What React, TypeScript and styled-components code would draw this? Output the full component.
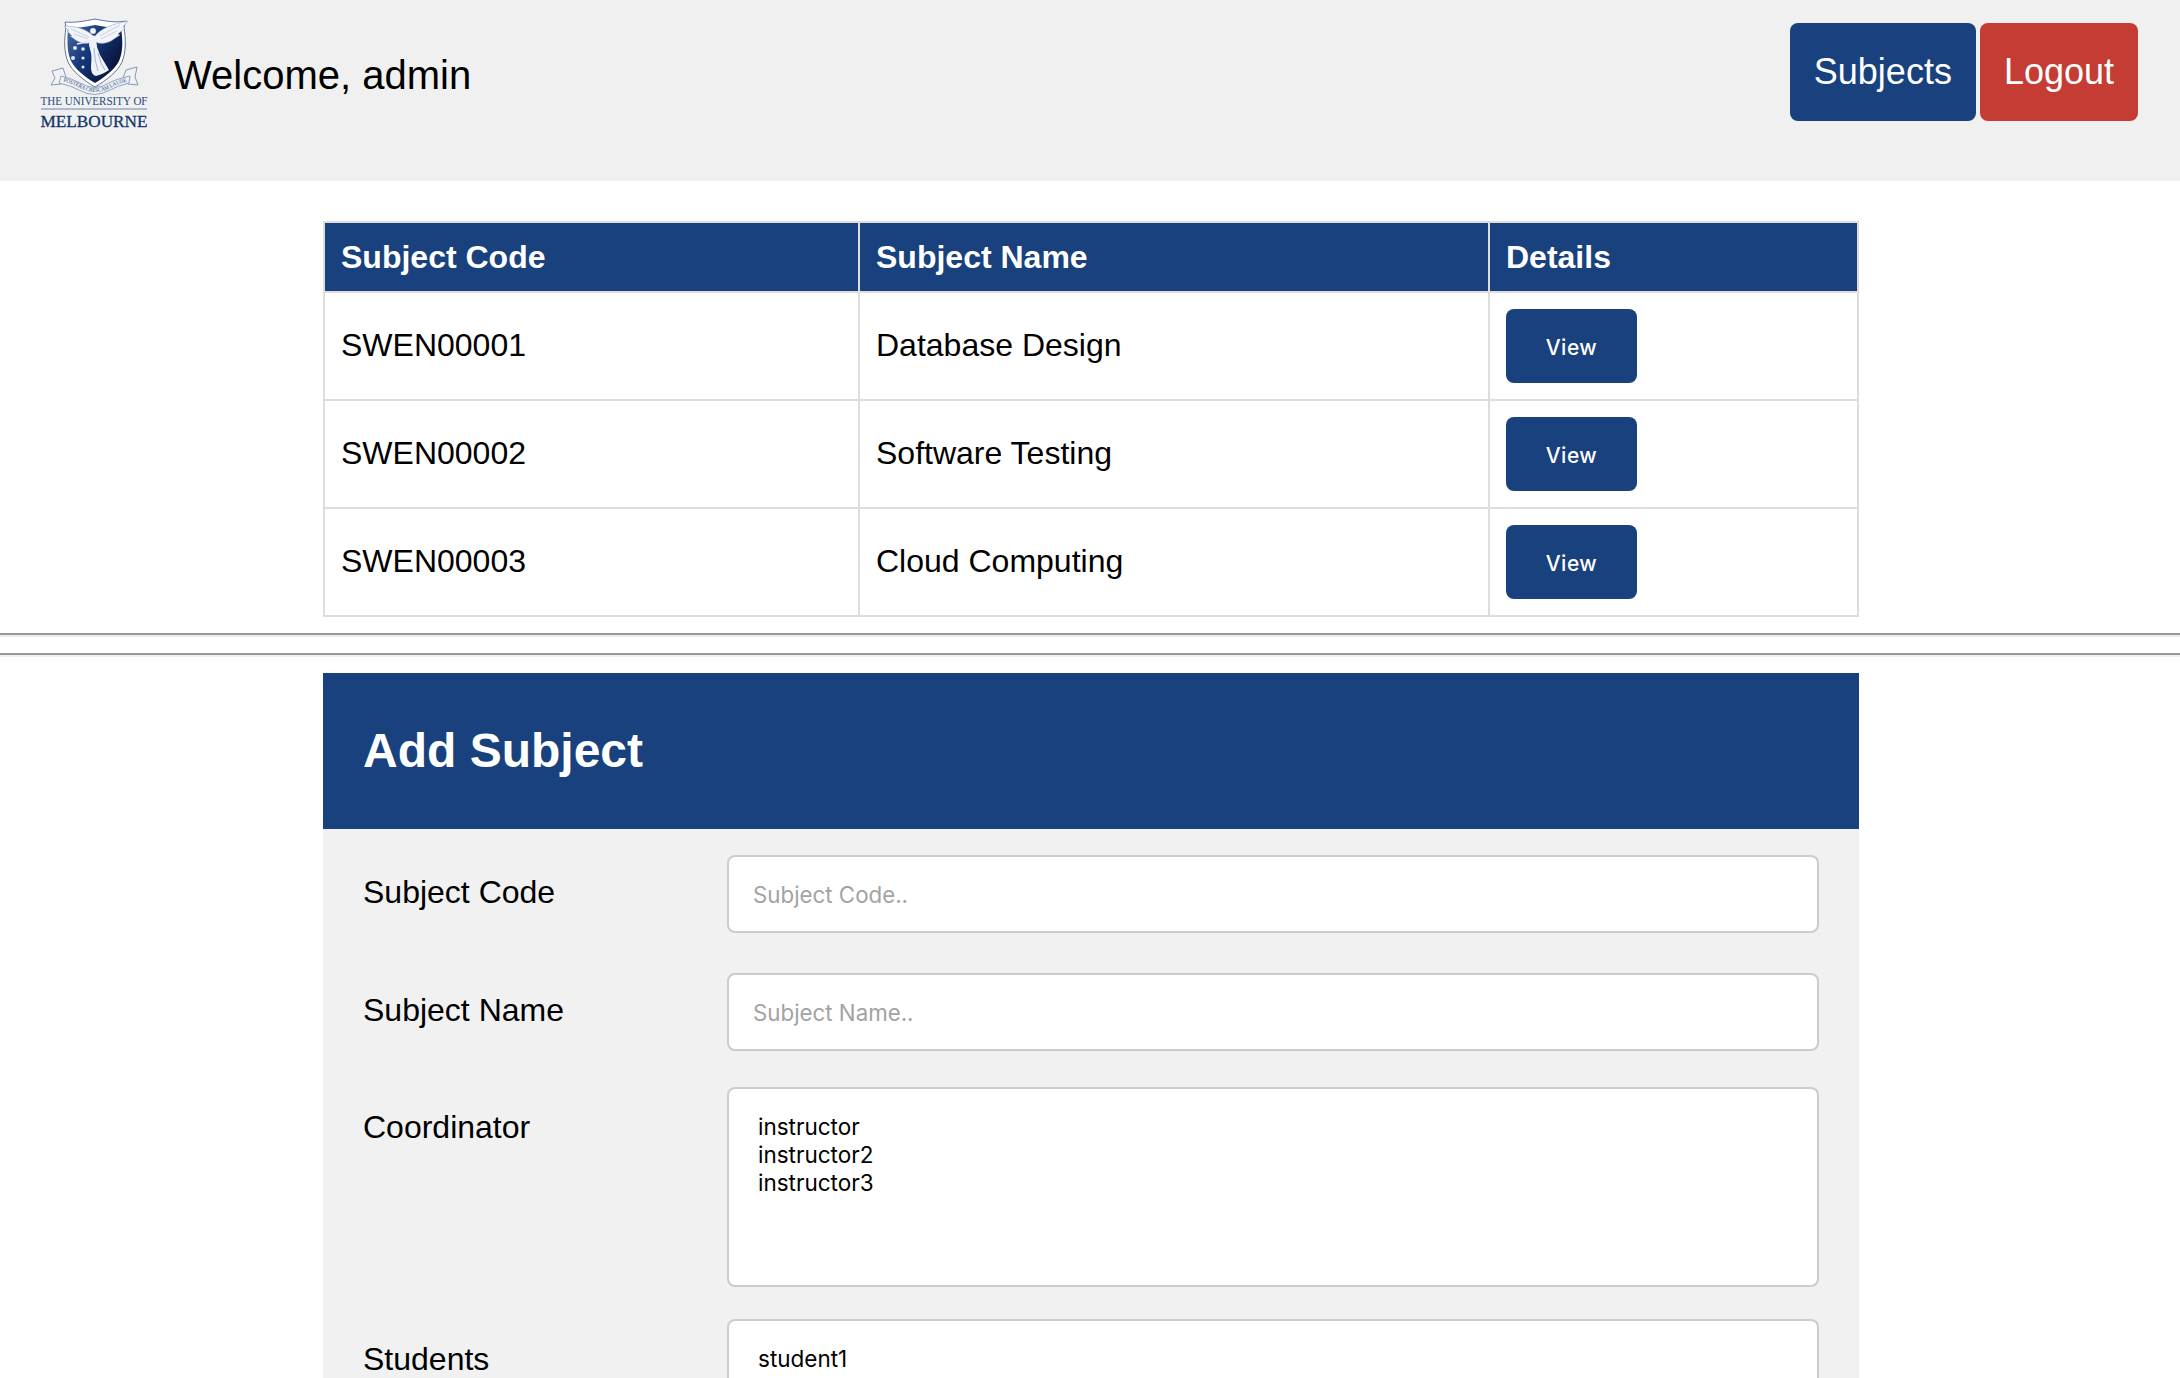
import React from "react";
import styled, { createGlobalStyle } from "styled-components";

const BLUE = "#18417e";
const SANS = '"Liberation Sans", Arial, sans-serif';
const UI = 'Inter, "Liberation Sans", sans-serif';
const SERIF = '"Liberation Serif", serif';

const GlobalStyle = createGlobalStyle`
  html, body {
    margin: 0;
    height: 100%;
    overflow: hidden;
    background: #fff;
    font-family: ${SANS};
    color: #000;
  }
  * {
    box-sizing: border-box;
  }
`;

const Header = styled.header`
  height: 181px;
  background: #f0f0f0;
  display: flex;
  justify-content: space-between;
  align-items: flex-start;
  padding: 18px 42px 0 40px;
`;

const Brand = styled.div`
  display: flex;
  align-items: flex-start;
  gap: 26px;
`;

const Welcome = styled.div`
  font-size: 40px;
  line-height: 46px;
  margin-top: 34px;
`;

const Nav = styled.nav`
  display: flex;
  gap: 4px;
  padding-top: 5px;
`;

const NavButton = styled.button<{ $danger?: boolean }>`
  height: 98px;
  padding: 0 24px;
  border: none;
  border-radius: 8px;
  background: ${(p) => (p.$danger ? "#c43c33" : BLUE)};
  color: #fff;
  font-family: ${SANS};
  font-size: 36px;
`;

const Content = styled.main<{ $flush?: boolean }>`
  padding: ${(p) => (p.$flush ? 0 : 40)}px 321px 0 323px;
`;

const Table = styled.table`
  width: 100%;
  border-collapse: collapse;
  table-layout: fixed;
  font-size: 32px;
`;

const CodeCol = styled.col`
  width: 535px;
`;

const NameCol = styled.col`
  width: 630px;
`;

const Th = styled.th`
  height: 70px;
  padding: 0 16px;
  background: ${BLUE};
  border: 2px solid #ddd;
  color: #fff;
  text-align: left;
  font-size: 32px;
`;

const Td = styled.td`
  height: 108px;
  padding: 0 16px 2px;
  border: 2px solid #ddd;
`;

const ViewButton = styled.button`
  display: block;
  width: 131px;
  height: 74px;
  margin-top: 2px;
  padding: 2px 0 0;
  border: none;
  border-radius: 8px;
  background: ${BLUE};
  color: #fff;
  font-family: ${UI};
  font-size: 21px;
  font-weight: 500;
  letter-spacing: 0.5px;
`;

const Rule = styled.hr`
  height: 4px;
  margin: 0;
  border: none;
  border-top: 2px solid #999;
  border-bottom: 2px solid #eee;
`;

const Rules = styled.div`
  display: flex;
  flex-direction: column;
  gap: 16px;
  margin-top: 16px;
`;

const FormCard = styled.section`
  margin-top: 16px;
  background: #f1f1f1;
`;

const FormTitle = styled.h2`
  height: 156px;
  margin: 0;
  padding: 0 40px 2px;
  background: ${BLUE};
  color: #fff;
  display: flex;
  align-items: center;
  font-size: 48px;
  font-weight: 700;
`;

const FormBody = styled.form`
  padding: 26px 40px 0;
  display: flex;
  flex-direction: column;
`;

const FormRow = styled.div<{ $gap: number }>`
  display: grid;
  grid-template-columns: 364px 1fr;
  margin-bottom: ${(p) => p.$gap}px;
`;

const Label = styled.label<{ $boxed?: boolean }>`
  font-size: 32px;
  line-height: 37px;
  padding-top: ${(p) => (p.$boxed ? 22 : 19)}px;
`;

const TextInput = styled.input`
  width: 100%;
  height: 78px;
  padding: 0 24px;
  background: #fff;
  border: 2px solid #ccc;
  border-radius: 8px;
  font-family: ${UI};
  font-size: 22.3px;
  &::placeholder {
    color: #a3a3a3;
    opacity: 1;
  }
`;

const ListBox = styled.div<{ $tall?: boolean }>`
  height: ${(p) => (p.$tall ? 300 : 200)}px;
  padding: 24px 29px;
  background: #fff;
  border: 2px solid #ccc;
  border-radius: 8px;
  font-family: ${UI};
  font-size: 22.5px;
  line-height: 28px;
`;

const ListItem = styled.div``;

const Logo = () => (
  <svg width="108" height="112" viewBox="0 0 108 112" role="img" aria-label="The University of Melbourne">
    <defs>
      <linearGradient id="shield" x1="0" y1="0.1" x2="1" y2="0.8">
        <stop offset="0" stopColor="#48679f" />
        <stop offset="0.4" stopColor="#17397c" />
        <stop offset="1" stopColor="#040c2b" />
      </linearGradient>
      <path id="motto" d="M21 63Q33 66 40 70Q55 78 70 70Q77 66 90 63" />
    </defs>
    {/* scroll tails */}
    <path d="M12 53l11-3 3 9-5 7-10 1 4-7z" fill="#eef1f6" stroke="#6d80a6" strokeWidth="0.8" />
    <path d="M97 49l-11 3-3 8 5 6 10 1-3-8z" fill="#eef1f6" stroke="#6d80a6" strokeWidth="0.8" />
    {/* shield */}
    <path d="M25 4c10 1 20-1 30-3 10 2 20 4 31 2l-2 6c2 14 2 25-2 35-4 9-15 18-27 25-12-7-23-16-27-25-4-10-4-21-2-35z" fill="#fff" stroke="#5f74a0" strokeWidth="1" />
    <path d="M28 10c9 0 18-1 27-3 9 2 18 3 26 3 2 13 2 24-2 33-4 8-14 16-24 22-10-6-20-14-24-22-4-9-4-20-3-33z" fill="url(#shield)" />
    {/* motto band */}
    <path d="M21 58q12 3 19 7 15 9 29 0 7-4 21-7l-1 7q-12 3-19 7-16 9-31 0-7-4-20-7z" fill="#eef1f6" stroke="#6d80a6" strokeWidth="0.7" />
    <text fontFamily={SERIF} fontSize="5.6" fill="#2a4a7c">
      <textPath href="#motto" startOffset="2" textLength="68" lengthAdjust="spacingAndGlyphs">
        POSTERA CRESCAM LAUDE
      </textPath>
    </text>
    {/* stars */}
    <g fill="#e3e9f3">
      <circle cx="35" cy="30" r="2" />
      <circle cx="43" cy="31" r="1.8" />
      <circle cx="33" cy="40" r="2" />
      <circle cx="43" cy="40" r="1.6" />
      <circle cx="43" cy="49" r="1.5" />
    </g>
    {/* wings */}
    <path d="M53 18C47 11 36 8 24 8l5 5-2 0 5 5-2 0 7 5c4 2 9 3 13 2 3-1 4-4 3-7z" fill="#f2f4f9" stroke="#8796b5" strokeWidth="0.5" />
    <path d="M55 18C61 10 73 6 88 3l-5 6 2 1-7 6 2 1-9 6c-4 2-9 3-13 2-3-1-4-4-3-7z" fill="#f2f4f9" stroke="#8796b5" strokeWidth="0.5" />
    <path d="M31 11l18 8M34 16l14 5M80 7L60 18M77 13L61 21" fill="none" stroke="#9aa8c4" strokeWidth="0.5" />
    {/* winged figure */}
    <circle cx="53" cy="13" r="3" fill="#f2f4f8" stroke="#8796b5" strokeWidth="0.4" />
    <path d="M50 19c2-2 5-2 6 0l1 10 3 8 9 15c-4 3-9 5-13 6-4-1-5-5-5-9 0-5 1-9 0-14l-2-8z" fill="#eff2f7" />
    <path d="M54 30l1 11 3 12M58 35l3 10 4 7" fill="none" stroke="#8796b5" strokeWidth="0.7" />
    <path d="M51 23L37 26" stroke="#dfe6f2" strokeWidth="1.6" />
    {/* wordmark */}
    <text x="54" y="86.5" textAnchor="middle" fontFamily={SERIF} fontSize="11.6" textLength="107" lengthAdjust="spacingAndGlyphs" fill="#2a4a7c">THE UNIVERSITY OF</text>
    <rect x="1" y="90.5" width="106" height="1" fill="#6d85ad" />
    <text x="54" y="109" textAnchor="middle" fontFamily={SERIF} fontSize="17" textLength="107" lengthAdjust="spacingAndGlyphs" fill="#14346b" stroke="#14346b" strokeWidth="0.3">MELBOURNE</text>
  </svg>
);

const subjects = [
  { code: "SWEN00001", name: "Database Design" },
  { code: "SWEN00002", name: "Software Testing" },
  { code: "SWEN00003", name: "Cloud Computing" },
];

const App: React.FC = () => {
  return (
    <>
      <GlobalStyle />
      <Header>
        <Brand>
          <Logo />
          <Welcome>Welcome, admin</Welcome>
        </Brand>
        <Nav>
          <NavButton>Subjects</NavButton>
          <NavButton $danger>Logout</NavButton>
        </Nav>
      </Header>
      <Content>
        <Table>
          <colgroup>
            <CodeCol />
            <NameCol />
            <col />
          </colgroup>
          <thead>
            <tr>
              <Th>Subject Code</Th>
              <Th>Subject Name</Th>
              <Th>Details</Th>
            </tr>
          </thead>
          <tbody>
            {subjects.map((subject) => (
              <tr key={subject.code}>
                <Td>{subject.code}</Td>
                <Td>{subject.name}</Td>
                <Td>
                  <ViewButton>View</ViewButton>
                </Td>
              </tr>
            ))}
          </tbody>
        </Table>
      </Content>
      <Rules>
        <Rule />
        <Rule />
      </Rules>
      <Content $flush>
        <FormCard>
          <FormTitle>Add Subject</FormTitle>
          <FormBody>
            <FormRow $gap={40}>
              <Label>Subject Code</Label>
              <TextInput placeholder="Subject Code.." />
            </FormRow>
            <FormRow $gap={36}>
              <Label>Subject Name</Label>
              <TextInput placeholder="Subject Name.." />
            </FormRow>
            <FormRow $gap={32}>
              <Label $boxed>Coordinator</Label>
              <ListBox>
                <ListItem>instructor</ListItem>
                <ListItem>instructor2</ListItem>
                <ListItem>instructor3</ListItem>
              </ListBox>
            </FormRow>
            <FormRow $gap={32}>
              <Label $boxed>Students</Label>
              <ListBox $tall>
                <ListItem>student1</ListItem>
                <ListItem>student2</ListItem>
                <ListItem>student3</ListItem>
              </ListBox>
            </FormRow>
          </FormBody>
        </FormCard>
      </Content>
    </>
  );
};

export default App;
